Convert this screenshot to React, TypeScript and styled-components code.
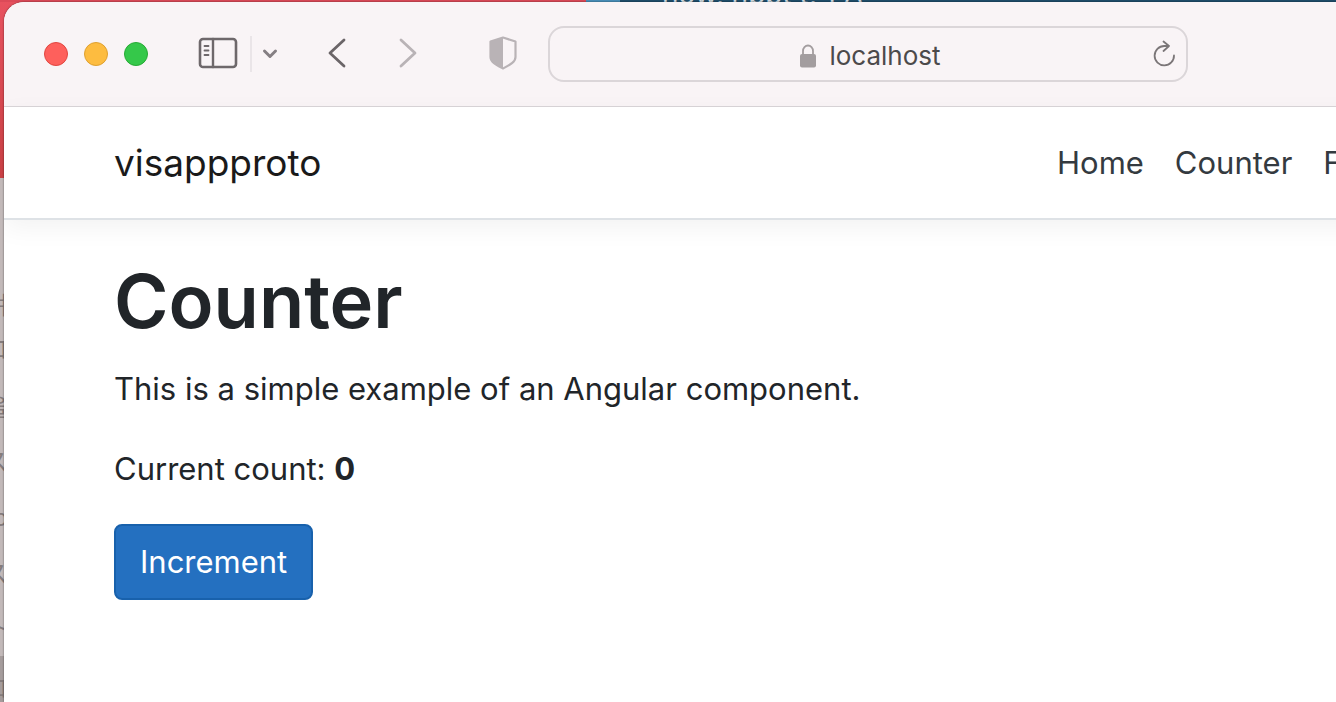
import React, { useState } from "react";
import styled, { createGlobalStyle } from "styled-components";

const GlobalStyle = createGlobalStyle`
  *, *::before, *::after { box-sizing: border-box; }
  html, body, #root { height: 100%; }
  body {
    margin: 0;
    overflow: hidden;
    font-family: Inter, "Liberation Sans", sans-serif;
    font-size: 31px;
    line-height: 48px;
    color: #212529;
    background: #c2b9b9;
  }
`;

const Desktop = styled.div`
  position: relative;
  display: flex;
  flex-direction: column;
  height: 100%;
  padding: 2px 0 0 4px;
  overflow: hidden;
  background:
    linear-gradient(90deg, #dc4a58 0 586px, #4a90ba 586px 620px, #1f4e6b 620px) 0 0 / 100% 2px no-repeat,
    linear-gradient(#e8525f, #c84044) 0 0 / 24px 178px no-repeat,
    linear-gradient(#a59c9c, #a59c9c) 0 656px / 4px 100% no-repeat,
    #c2b9b9;
`;

const BackTitle = styled.div`
  position: absolute;
  top: 0;
  left: 662px;
  height: 2px;
  overflow: hidden;
  display: flex;
  align-items: flex-end;
  color: #d5dde2;
  font-size: 28px;
  line-height: 16px;
  white-space: pre;
`;

const Glyph = styled.span<{ $top: number }>`
  position: absolute;
  top: ${(p) => p.$top}px;
  left: 0;
  width: 4px;
  height: 28px;
  overflow: hidden;
  display: flex;
  justify-content: flex-end;
  font-family: "Noto Sans CJK JP", sans-serif;
  font-size: 24px;
  line-height: 28px;
  color: #857c7c;

  &::after {
    content: "";
    flex: none;
    margin-right: -4px;
  }
`;

const Window = styled.main`
  flex: 1;
  display: flex;
  flex-direction: column;
  overflow: hidden;
  background: #fff;
  border-top-left-radius: 20px;
  box-shadow: 0 0 2px rgba(0, 0, 0, 0.6);
  position: relative;
`;

const Toolbar = styled.div`
  display: flex;
  align-items: center;
  flex: none;
  height: 105px;
  padding: 0 40px;
  background: #f9f4f6;
  border-bottom: 1px solid #d9d5d8;
`;

const Lights = styled.div`
  display: flex;
  gap: 16px;
  margin-right: 50px;
`;

const Light = styled.button<{ $fill: string; $edge: string }>`
  width: 24px;
  height: 24px;
  padding: 0;
  border: 1px solid ${(p) => p.$edge};
  border-radius: 50%;
  background: ${(p) => p.$fill};
`;

const IconButton = styled.button<{ $gap?: number }>`
  display: flex;
  padding: 0 0 2px;
  border: 0;
  background: none;
  margin-right: ${(p) => p.$gap ?? 0}px;
`;

const Divider = styled.span`
  width: 2px;
  height: 36px;
  margin-right: 9px;
  background: #eae5e8;
`;

const AddressBar = styled.div`
  display: grid;
  grid-template-columns: 24px 1fr 24px;
  align-items: center;
  flex: none;
  width: 640px;
  height: 56px;
  padding: 2px 10px 0;
  border: 2px solid #dbd6d9;
  border-radius: 16px;
`;

const Address = styled.div`
  grid-column: 2;
  display: flex;
  align-items: center;
  justify-content: center;
  gap: 12px;
  padding: 2px 0 0 4px;
  color: #4c4a4b;
  font-size: 26px;
  line-height: 32px;
`;

const Navbar = styled.header`
  display: flex;
  align-items: center;
  flex: none;
  height: 113px;
  margin-right: -40px;
  padding-left: 110px;
  border-bottom: 2px solid #dee2e6;
  box-shadow: 0 8px 24px rgba(0, 0, 0, 0.05);
`;

const Brand = styled.a`
  flex: 1;
  color: #1a1a1a;
  font-size: 37px;
  line-height: 60px;
  text-decoration: none;
`;

const Links = styled.nav`
  display: flex;
  flex: none;
  gap: 31px;
  width: 319px;
  overflow: hidden;
  white-space: nowrap;
`;

const NavLink = styled.a`
  color: #343a40;
  text-decoration: none;
`;

const Content = styled.section`
  padding: 33px 110px;
`;

const Title = styled.h1`
  margin: 0 0 16px;
  font-size: 74px;
  font-weight: 600;
  line-height: 96px;
`;

const Text = styled.p`
  margin: 0 0 32px;

  & + button {
    margin-top: -1px;
  }
`;

const Increment = styled.button`
  height: 76px;
  padding: 0 24px;
  border: 2px solid #1861ac;
  border-radius: 8px;
  background: #2470c0;
  color: #fff;
  font: inherit;
`;

const backgroundGlyphs: [string, number][] = [
  ["며", 290],
  ["ロ", 334],
  ["을", 392],
  ["ス", 446],
  ["o", 502],
  ["ス", 558],
  ["ト", 612],
  ["ロ", 673],
];

export default function App() {
  const [count, setCount] = useState(0);
  return (
    <Desktop>
      <GlobalStyle />
      <BackTitle aria-hidden="true">now, nppt t, 1 A</BackTitle>
      {backgroundGlyphs.map(([glyph, top]) => (
        <Glyph key={top} $top={top} aria-hidden="true">
          {glyph}
        </Glyph>
      ))}
      <Window>
        <Toolbar>
          <Lights>
            <Light aria-label="Close" $fill="#fe605c" $edge="#e14640" />
            <Light aria-label="Minimize" $fill="#fdbc40" $edge="#dfa030" />
            <Light aria-label="Zoom" $fill="#35c84a" $edge="#27aa35" />
          </Lights>
          <IconButton aria-label="Sidebar" $gap={12}>
            <svg width="40" height="32" viewBox="0 0 40 32" fill="none" stroke="#6e686b" strokeLinecap="round">
              <rect x="2" y="2" width="36" height="28" rx="3" strokeWidth="2.6" />
              <path d="M15 2v28" strokeWidth="2.4" />
              <path d="M6.500 9h4M6.500 13.500h4M6.500 18h4" strokeWidth="1.800" />
            </svg>
          </IconButton>
          <Divider />
          <IconButton aria-label="Tab groups" $gap={48}>
            <svg width="18" height="14" viewBox="0 0 18 14" fill="none" stroke="#857f83" strokeWidth="3" strokeLinecap="round" strokeLinejoin="round">
              <path d="M3.500 5l5.500 5.500L14.500 5" />
            </svg>
          </IconButton>
          <IconButton aria-label="Back" $gap={51}>
            <svg width="20" height="30" viewBox="0 0 20 30" fill="none" stroke="#6b6568" strokeWidth="2.800" strokeLinecap="round" strokeLinejoin="round">
              <path d="M17 2L3 15l14 13" />
            </svg>
          </IconButton>
          <IconButton aria-label="Forward" $gap={71}>
            <svg width="20" height="30" viewBox="0 0 20 30" fill="none" stroke="#b9b3b6" strokeWidth="2.800" strokeLinecap="round" strokeLinejoin="round">
              <path d="M3 2l14 13L3 28" />
            </svg>
          </IconButton>
          <IconButton aria-label="Privacy report" $gap={31}>
            <svg width="28" height="34" viewBox="0 0 28 34">
              <path d="M14 1.500L26.500 5.500V21c0 5-5 7.500-12.500 11.500C6.500 28.500 1.500 26 1.500 21V5.500z" fill="none" stroke="#b9b3b6" strokeWidth="2.200" strokeLinejoin="round" />
              <path d="M14 1.500V32.500C6.500 28.500 1.500 26 1.500 21V5.500z" fill="#b9b3b6" />
            </svg>
          </IconButton>
          <AddressBar>
            <Address>
              <svg width="18" height="24" viewBox="0 0 18 24">
                <path d="M4 11V7a5 5.500 0 0 1 10 0v4" fill="none" stroke="#a39d9f" strokeWidth="1.800" />
                <rect x="1" y="10" width="16" height="13.500" rx="2" fill="#a39d9f" />
              </svg>
              localhost
            </Address>
            <IconButton aria-label="Reload">
              <svg width="24" height="28" viewBox="0 0 24 28" fill="none" stroke="#7b7678" strokeWidth="1.800" strokeLinecap="round" strokeLinejoin="round">
                <path d="M22 15.500A9.700 9.700 0 1 1 12.300 6H17M11.500 1.500L17 6l-5.500 5" />
              </svg>
            </IconButton>
          </AddressBar>
        </Toolbar>
        <Navbar>
          <Brand href="#">visappproto</Brand>
          <Links>
            <NavLink href="#">Home</NavLink>
            <NavLink href="#">Counter</NavLink>
            <NavLink href="#">Fetch data</NavLink>
          </Links>
        </Navbar>
        <Content>
          <Title>Counter</Title>
          <Text>This is a simple example of an Angular component.</Text>
          <Text>
            Current count: <strong>{count}</strong>
          </Text>
          <Increment onClick={() => setCount(count + 1)}>Increment</Increment>
        </Content>
      </Window>
    </Desktop>
  );
}
